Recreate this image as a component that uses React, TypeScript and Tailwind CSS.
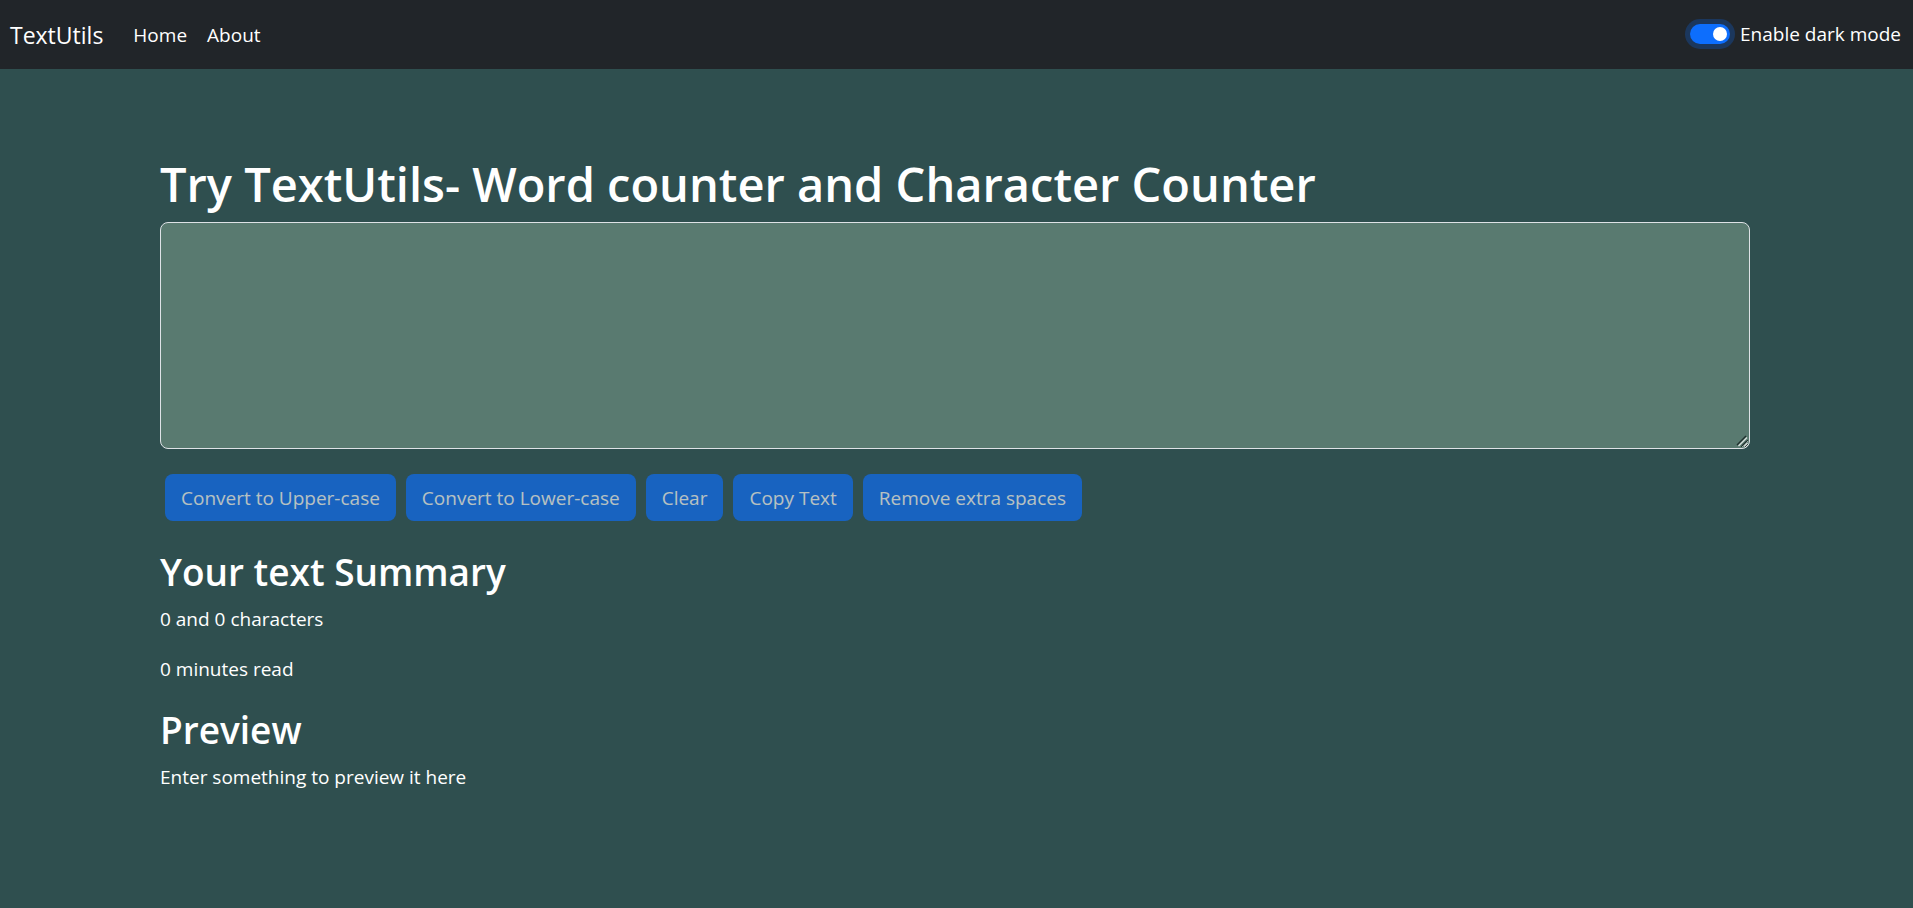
import { useState } from "react";

const buttonClass =
  "h-[47px] cursor-pointer rounded-lg bg-[#0d6efd] px-4 text-white disabled:cursor-default disabled:opacity-65";

const headingClass = "mb-2 pt-[2px] text-[37px] leading-[48px] font-semibold";

export default function App() {
  const [text, setText] = useState("");
  const [dark, setDark] = useState(true);
  const words = text.split(/\s+/).filter(Boolean).length;
  const empty = text.length === 0;

  return (
    <div
      className={`min-h-screen font-['Open_Sans','Noto_Sans',sans-serif] text-[19px] leading-[30px] ${
        dark ? "bg-[#2f4f4f] text-white" : "bg-white text-[#212529]"
      }`}
    >
      <nav className="flex h-[69px] items-center bg-[#212529] pr-3 pl-[10px] text-white">
        <a href="#" className="mr-5 text-[23px]">TextUtils</a>
        <a href="#home" className="px-[10px]">Home</a>
        <a href="#about" className="px-[10px]">About</a>
        <label className="mb-[2px] ml-auto flex cursor-pointer items-center gap-[10px]">
          <input
            type="checkbox"
            role="switch"
            checked={dark}
            onChange={() => setDark(!dark)}
            className="flex h-5 w-10 cursor-pointer appearance-none items-center rounded-full bg-gray-500 px-[3px] ring-5 ring-[#0d6efd]/25 before:size-[14px] before:rounded-full before:bg-white checked:justify-end checked:bg-[#0d6efd]"
          />
          Enable dark mode
        </label>
      </nav>
      <div className="pr-[3px] pt-[85px] pb-5">
        <main className="mx-auto max-w-[1590px]">
          <h1 className="mb-2 text-[47px] leading-[60px] font-semibold">
            <label htmlFor="box">Try TextUtils- Word counter and Character Counter</label>
          </h1>
          <div className="relative">
            <textarea
              id="box"
              rows={7}
              value={text}
              onChange={(e) => setText(e.target.value)}
              className="block h-[227px] w-full rounded-lg border border-[#dee2e6] bg-[#597a70] px-4 py-2 outline-none"
            />
            <svg
              aria-hidden="true"
              viewBox="0 0 12 12"
              className="pointer-events-none absolute right-[2px] bottom-[2px] size-3"
              fill="none"
              strokeWidth="1.4"
            >
              <path d="M1 10 10 1M6 11l5-5" stroke="#1f2f2c" />
              <path d="M2.5 11 11 2.5M8 11.5 11.5 8" stroke="#d5dedb" />
            </svg>
          </div>
          <div className="flex flex-wrap gap-[10px] px-[5px] py-[25px]">
            <button disabled={empty} className={buttonClass} onClick={() => setText(text.toUpperCase())}>Convert to Upper-case</button>
            <button disabled={empty} className={buttonClass} onClick={() => setText(text.toLowerCase())}>Convert to Lower-case</button>
            <button disabled={empty} className={buttonClass} onClick={() => setText("")}>Clear</button>
            <button disabled={empty} className={buttonClass} onClick={() => navigator.clipboard.writeText(text)}>Copy Text</button>
            <button disabled={empty} className={buttonClass} onClick={() => setText(text.split(/\s+/).join(" "))}>Remove extra spaces</button>
          </div>
          <h2 className={headingClass}>Your text Summary</h2>
          <p className="mb-5">{words} and {text.length} characters</p>
          <p className="mb-5">{0.008 * words} minutes read</p>
          <h2 className={headingClass}>Preview</h2>
          <p>{empty ? "Enter something to preview it here" : text}</p>
        </main>
      </div>
    </div>
  );
}
